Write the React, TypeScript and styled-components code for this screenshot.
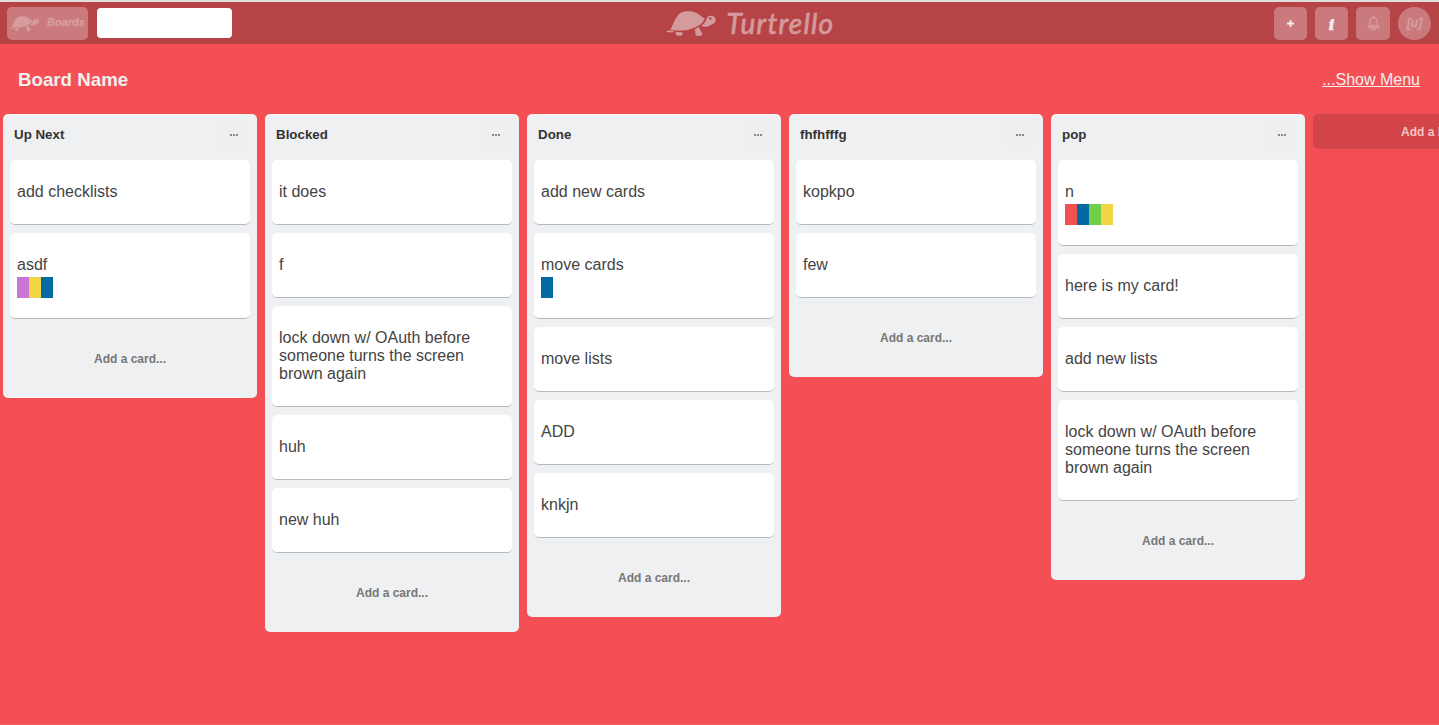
import React from "react";
import styled, { createGlobalStyle, css } from "styled-components";

const GlobalStyle = createGlobalStyle`
  * { box-sizing: border-box; }
  html, body { margin: 0; height: 100%; overflow: hidden; }
  body { background: #f44f54; font-family: "Liberation Sans", Arial, sans-serif; color: #444; }
  button { font-family: inherit; border: 0; padding: 0; margin: 0; }
  h1, h2, p { margin: 0; }
`;

const Page = styled.div`
  height: 725px;
  overflow: hidden;
  border-top: 2px solid #dfdede;
  border-bottom: 1px solid #f6605f;
`;

const TopBar = styled.header`
  height: 42px;
  background: #b64447;
  display: flex;
  justify-content: space-between;
  align-items: center;
  padding: 0 8px 0 7px;
`;

const BarGroup = styled.div<{ $end?: boolean }>`
  display: flex;
  align-items: center;
  gap: ${(p) => (p.$end ? 8 : 9)}px;
`;

const BarButton = styled.button<{ $round?: boolean; $faint?: boolean; $wide?: boolean; $width?: number }>`
  width: ${(p) => p.$width ?? 33}px;
  height: 33px;
  display: flex;
  align-items: center;
  justify-content: center;
  border-radius: ${(p) => (p.$round ? "50%" : "5px")};
  background: #ca7a7c;
  color: ${(p) => (p.$faint ? "#d79c9d" : "#f3eeee")};
  font-size: 12px;
  font-weight: bold;
  ${(p) =>
    p.$wide &&
    css`
      width: 81px;
      justify-content: flex-start;
      padding-left: 2px;
      font-size: 11px;
      font-style: italic;
      gap: 8px;
    `}
`;

const BoardsLabel = styled.span`
  margin-top: -3px;
  -webkit-text-stroke: 0.4px currentColor;
`;

const UserMark = styled.span`
  font-style: italic;
  font-size: 12px;
  -webkit-text-stroke: 0.4px currentColor;
`;

const InfoMark = styled.span`
  font-family: "DejaVu Serif", serif;
  font-style: italic;
  font-size: 15px;
  line-height: 16px;
  padding-top: 3px;
  -webkit-text-stroke: 0.7px currentColor;
`;

const Search = styled.input`
  width: 135px;
  height: 30px;
  border: 0;
  border-radius: 4px;
  background: #fff;
  margin-top: -1px;
`;

const Logo = styled.div`
  display: flex;
  align-items: center;
  gap: 11px;
  margin-right: 7px;
  color: #d59a9b;
`;

const Wordmark = styled.span`
  width: 107px;
  font-family: Lato, sans-serif;
  font-style: italic;
  font-size: 28px;
  line-height: 30px;
  letter-spacing: 1.2px;
  white-space: nowrap;
  -webkit-text-stroke: 0.7px currentColor;
`;

const BoardHeader = styled.div`
  height: 70px;
  display: flex;
  justify-content: space-between;
  align-items: center;
  padding: 1px 19px 0 18px;
  color: #f0f0f0;
`;

const BoardTitle = styled.h1`
  font-size: 18.72px;
  line-height: 22px;
`;

const MenuLink = styled.a`
  font-size: 16px;
  line-height: 20px;
  padding-top: 1px;
  text-decoration: underline;
`;

const Lists = styled.main`
  display: flex;
  align-items: flex-start;
  gap: 8px;
  padding-left: 3px;
`;

const Column = styled.section`
  flex: 0 0 254px;
  background: #eff0f2;
  border-radius: 5px;
  padding: 0 7px;
`;

const ColumnHeader = styled.div`
  height: 46px;
  display: flex;
  align-items: center;
  justify-content: space-between;
  padding: 0 0 4px 4px;
`;

const ColumnTitle = styled.h2`
  font-size: 13.33px;
  line-height: 18px;
  margin-top: -1px;
  color: #333;
`;

const MoreButton = styled.button`
  width: 32px;
  height: 30px;
  display: flex;
  align-items: center;
  justify-content: center;
  gap: 1px;
  background: #efeff0;
  border-radius: 4px;
`;

const Dot = styled.i`
  width: 2px;
  height: 2px;
  background: #888;
`;

const Cards = styled.div`
  display: flex;
  flex-direction: column;
  gap: 8px;
`;

const CardBox = styled.article<{ $tagged: boolean }>`
  background: #fff;
  border-bottom: 1px solid #b4babf;
  border-radius: 5px;
  padding: 23px 7px ${(p) => (p.$tagged ? 20 : 23)}px;
`;

const CardText = styled.p`
  font-size: 16px;
  line-height: 18px;
`;

const Tags = styled.div`
  display: flex;
  margin-top: 3px;
`;

const Tag = styled.span<{ $color: string }>`
  width: 12px;
  height: 21px;
  background: ${(p) => p.$color};
`;

const AddCard = styled.button`
  display: block;
  width: 100%;
  height: 79px;
  background: transparent;
  color: #777;
  font-size: 12px;
  font-weight: bold;
`;

const AddList = styled.button`
  flex: 0 0 254px;
  height: 35px;
  padding-left: 88px;
  text-align: left;
  background: #d34548;
  color: #f5c4c5;
  border-radius: 5px;
  font-size: 12px;
  font-weight: bold;
`;

const Turtle = ({ width }: { width: number }) => (
  <svg width={width} height={width * 0.5} viewBox="0 0 50 25" fill="currentColor">
    <path d="M4.300 18.700C7.500 14 9 5.500 15 1.800 18-.2 26-.3 30.500 2c3 1.500 5 4.200 8.300 5.300-1.300 3.700-3.500 6-6.800 7.600-4.500 2.300-9 4.100-15 4.500-4.500.3-9 .1-12.700-.7Z" />
    <path d="M-.2 20.300c1.500-.8 3-.9 4.500-.8 1.500.1 2.600.4 3.800.9-2 1.100-6 1.300-8.300-.1ZM9.800 20.900l6.600.3c.5 1.200 0 3-1 3.500h-4c-1.500-.4-2.100-2.600-1.600-3.800ZM28.500 18.300l4.600-2.200c.6 3 3 4.800 3.400 7.700-.6 1.200-5.600 1.500-6.700.4-.7-1.800.1-3.900-1.300-5.900Z" />
    <path fillRule="evenodd" d="M35.200 14.800c2.300-1.700 4-3.400 4.900-5.900.7-3 2.700-4.400 5.200-4.200 3 .2 4.600 2.500 4.300 5-.3 3-3 3-4.500 4-2.600 2.200-7 2.800-9.900 1.100ZM43.200 7.500a1.200 1.200 0 1 0 2.400 0 1.200 1.200 0 0 0-2.400 0Z" />
  </svg>
);

const Bell = () => (
  <svg width="13" height="15" viewBox="0 0 13 15" fill="none" stroke="currentColor" strokeWidth="1.3" strokeLinejoin="round">
    <path d="M6.500 0v1.500M.8 11.500c1.300-1.200 2-2.500 2-5 0-3.200 1.500-4.800 3.700-4.800s3.700 1.600 3.700 4.800c0 2.500.7 3.800 2 5ZM3 9.500h7M4.500 11.500c0 3.400 4 3.400 4 0" />
  </svg>
);

const Plus = () => (
  <svg width="7" height="7" viewBox="0 0 7 7" fill="none" stroke="currentColor" strokeWidth="2">
    <path d="M3.500 .3v6.400M0 3.500h7" />
  </svg>
);

const RED = "#f05351";
const BLUE = "#036ba2";
const GREEN = "#71ce48";
const YELLOW = "#f2d544";
const PURPLE = "#c976d5";

type Card = { text: string; tags?: string[] };

const lists: { title: string; cards: Card[] }[] = [
  { title: "Up Next", cards: [{ text: "add checklists" }, { text: "asdf", tags: [PURPLE, YELLOW, BLUE] }] },
  {
    title: "Blocked",
    cards: [
      { text: "it does" },
      { text: "f" },
      { text: "lock down w/ OAuth before someone turns the screen brown again" },
      { text: "huh" },
      { text: "new huh" },
    ],
  },
  {
    title: "Done",
    cards: [
      { text: "add new cards" },
      { text: "move cards", tags: [BLUE] },
      { text: "move lists" },
      { text: "ADD" },
      { text: "knkjn" },
    ],
  },
  { title: "fhfhfffg", cards: [{ text: "kopkpo" }, { text: "few" }] },
  {
    title: "pop",
    cards: [
      { text: "n", tags: [RED, BLUE, GREEN, YELLOW] },
      { text: "here is my card!" },
      { text: "add new lists" },
      { text: "lock down w/ OAuth before someone turns the screen brown again" },
    ],
  },
];

export default function App() {
  return (
    <Page>
      <GlobalStyle />
      <TopBar>
        <BarGroup>
          <BarButton $wide $faint>
            <Turtle width={30} />
            <BoardsLabel>Boards</BoardsLabel>
          </BarButton>
          <Search aria-label="Search" />
        </BarGroup>
        <Logo>
          <Turtle width={50} />
          <Wordmark>Turtrello</Wordmark>
        </Logo>
        <BarGroup $end>
          <BarButton aria-label="Create"><Plus /></BarButton>
          <BarButton><InfoMark>i</InfoMark></BarButton>
          <BarButton $faint $width={34} aria-label="Notifications"><Bell /></BarButton>
          <BarButton $round $faint><UserMark>[u]</UserMark></BarButton>
        </BarGroup>
      </TopBar>
      <BoardHeader>
        <BoardTitle>Board Name</BoardTitle>
        <MenuLink>...Show Menu</MenuLink>
      </BoardHeader>
      <Lists>
        {lists.map((list) => (
          <Column key={list.title}>
            <ColumnHeader>
              <ColumnTitle>{list.title}</ColumnTitle>
              <MoreButton aria-label="List actions"><Dot /><Dot /><Dot /></MoreButton>
            </ColumnHeader>
            <Cards>
              {list.cards.map((card) => (
                <CardBox key={card.text} $tagged={!!card.tags}>
                  <CardText>{card.text}</CardText>
                  {card.tags && <Tags>{card.tags.map((c) => <Tag key={c} $color={c} />)}</Tags>}
                </CardBox>
              ))}
            </Cards>
            <AddCard>Add a card...</AddCard>
          </Column>
        ))}
        <AddList>Add a list...</AddList>
      </Lists>
    </Page>
  );
}
